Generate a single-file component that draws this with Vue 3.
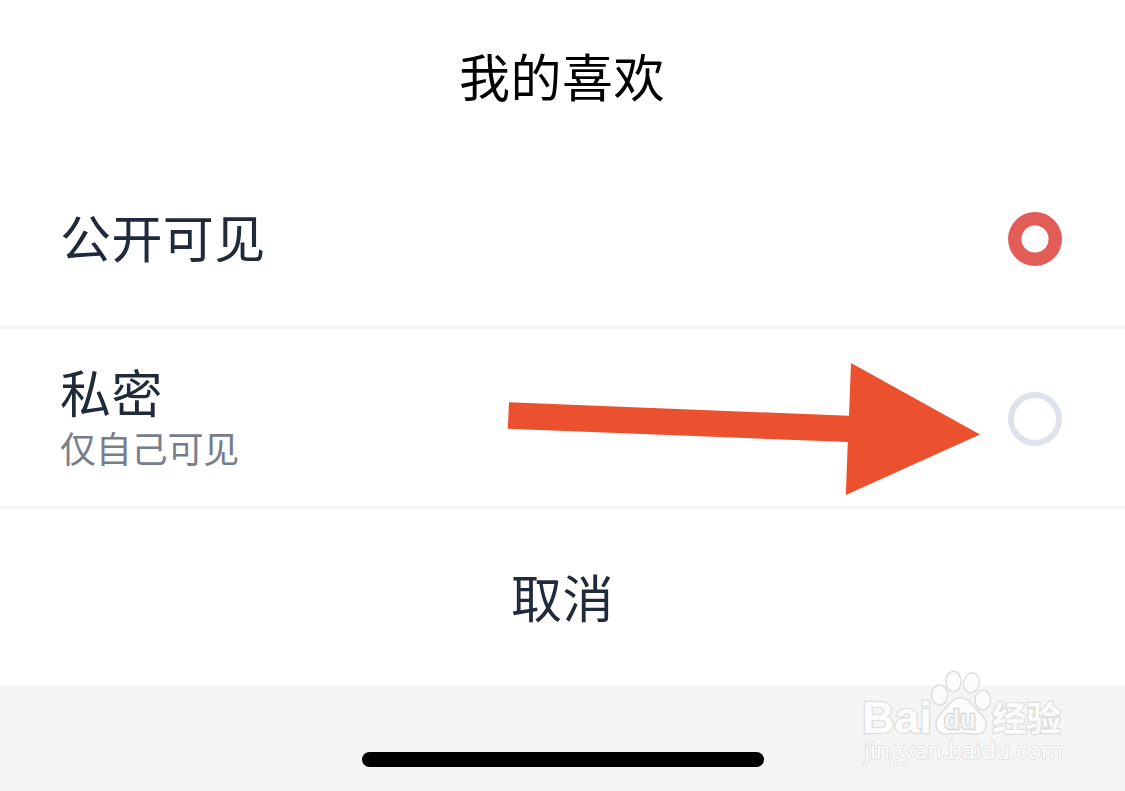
<template>
  <div class="sheet">
    <h1 class="title">我的喜欢</h1>

    <ul class="options" role="radiogroup">
      <li
        v-for="option in options"
        :key="option.value"
        class="option"
        role="radio"
        :aria-checked="selected === option.value"
        @click="selected = option.value"
      >
        <div class="option-text">
          <span class="label">{{ option.label }}</span>
          <span v-if="option.hint" class="hint">{{ option.hint }}</span>
        </div>
        <span class="radio" :class="{ checked: selected === option.value }"></span>
      </li>
    </ul>

    <button class="cancel" type="button">取消</button>

    <div class="home-area">
      <span class="home-bar"></span>
    </div>

    <!-- Pointer to the private option -->
    <svg class="arrow" width="474" height="134" viewBox="507 362 474 134" aria-hidden="true">
      <path d="M509 402.2L849 415.8L851 363L980 434.5L845.8 495L847.8 442L507.8 428.8Z" fill="#eb512f" />
    </svg>

    <svg class="watermark" width="215" height="111" viewBox="855 665 215 111" aria-hidden="true">
      <g class="mark">
        <text class="brand" x="862" y="733" textLength="70" lengthAdjust="spacingAndGlyphs">Bai</text>
        <ellipse cx="939.5" cy="695" rx="8" ry="10" />
        <ellipse cx="953.5" cy="681.5" rx="7.6" ry="10.3" />
        <ellipse cx="971.3" cy="682.8" rx="7.8" ry="10" transform="rotate(12 971.3 682.8)" />
        <ellipse cx="982.8" cy="700" rx="7.8" ry="10" />
        <path d="M960.5 697.5C967 697.5 971 703 975 708C980 714 986.500 718 986 725C985.500 733 980 735 973 734C965 733 957 733 949 734C941 735 936 732 936 724C936 717 942 713 946 708C950 702 954 697.500 960.500 697.500Z" />
        <text class="du" x="944" y="728.500" textLength="32" lengthAdjust="spacingAndGlyphs">du</text>
        <text class="cn" x="992" y="731" textLength="69" lengthAdjust="spacingAndGlyphs">经验</text>
        <text class="site" x="864" y="759" textLength="199" lengthAdjust="spacingAndGlyphs">jingyan.baidu.com</text>
      </g>
    </svg>
  </div>
</template>

<script setup>
import { ref } from 'vue'

const options = [
  { value: 'public', label: '公开可见' },
  { value: 'private', label: '私密', hint: '仅自己可见' },
]

const selected = ref('public')
</script>

<style>
body {
  margin: 0;
  background: #fff;
}
</style>

<style scoped>
.sheet {
  position: relative;
  display: flex;
  flex-direction: column;
  height: 791px;
  overflow: hidden;
  background: #fff;
  color: #202a3a;
  font-family: 'Noto Sans CJK SC', sans-serif;
}

.title {
  height: 149px;
  margin: 0;
  padding: 3px 1px 0 0;
  box-sizing: border-box;
  color: #000;
  font-size: 51px;
  font-weight: 400;
  line-height: 144px;
  letter-spacing: 0.5px;
  text-align: center;
}

.options {
  list-style: none;
  margin: 0;
  padding: 0;
}

.option {
  display: flex;
  align-items: center;
  justify-content: space-between;
  height: 180px;
  padding: 0 63px 0 60px;
  box-sizing: border-box;
  box-shadow: inset 0 -3px #f5f5f5;
}

.option-text {
  display: flex;
  flex-direction: column;
  padding-bottom: 6px;
}

.label {
  font-size: 51px;
  line-height: 62px;
  letter-spacing: 0.4px;
}

.hint {
  color: #777e8b;
  font-size: 36px;
  line-height: 50px;
  letter-spacing: -0.2px;
}

.radio {
  width: 54px;
  height: 54px;
  box-sizing: border-box;
  border: 6px solid #dfe1eb;
  border-radius: 50%;
}

.radio.checked {
  border: none;
  background: radial-gradient(circle, #fff 13px, #e35d58 14px);
}

.cancel {
  height: 177px;
  padding: 0 0 3px;
  border: 0;
  background: none;
  color: inherit;
  font-family: inherit;
  font-size: 51px;
  letter-spacing: 0.5px;
}

.home-area {
  display: flex;
  flex: 1;
  align-items: flex-end;
  justify-content: center;
  padding-bottom: 24px;
  background: #f5f5f5;
}

.home-bar {
  width: 402px;
  height: 15px;
  border-radius: 8px;
  background: #000;
}

.arrow {
  position: absolute;
  top: 362px;
  left: 507px;
}

.watermark {
  position: absolute;
  top: 665px;
  left: 855px;
}

.mark {
  fill: #fcfcfc;
  stroke: #dedede;
  stroke-width: 1.5;
}

.mark text {
  paint-order: stroke;
  stroke-width: 2.4;
}

.brand {
  font: 700 45px 'Liberation Sans', sans-serif;
}

.mark .du {
  fill: #f5f5f5;
  stroke: #d4d4d4;
  font: 700 27px 'Liberation Sans', sans-serif;
}

.cn {
  font: 700 34px 'Noto Sans CJK SC', sans-serif;
}

.mark .site {
  stroke: #e2e2e2;
  stroke-width: 1.8;
  font: 400 23px 'Open Sans', sans-serif;
}
</style>
